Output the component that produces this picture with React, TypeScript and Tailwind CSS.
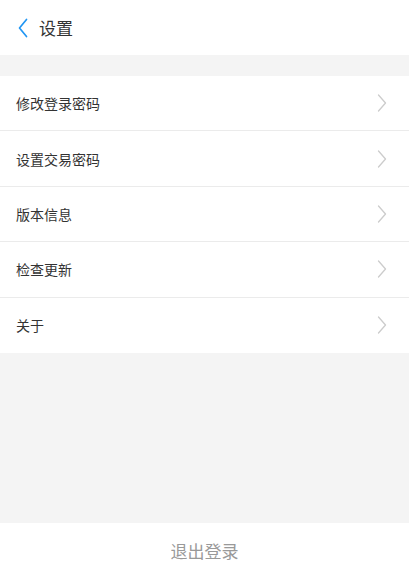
const items = ["修改登录密码", "设置交易密码", "版本信息", "检查更新", "关于"]

export default function App() {
  return (
    <div className="flex h-screen flex-col bg-[#f4f4f4] font-['Noto_Sans_CJK_SC',sans-serif] text-[#333]">
      {/* header */}
      <header className="flex h-[55px] shrink-0 items-center bg-white pl-[18px]">
        <svg width="10" height="20" viewBox="0 0 10 20" fill="none" className="mt-[1px]">
          <path d="M8.5 1.5L1.5 10l7 8.5" stroke="#2196f3" strokeWidth="1.7" strokeLinecap="round" strokeLinejoin="round" />
        </svg>
        <span className="ml-[11px] text-[17px] leading-none">设置</span>
      </header>

      <div className="mt-[21px] bg-white">
        {items.map((label, i) => (
          <div
            key={label}
            className={
              "flex h-[55.4px] items-center justify-between pl-4 pr-[22px] " +
              (i < items.length - 1 ? "border-b border-[#ebebeb]" : "")
            }
          >
            <span className="text-[14px] leading-none">{label}</span>
            <svg width="10" height="18" viewBox="0 0 10 18" fill="none">
              <path d="M1.5 1l7 8-7 8" stroke="#cccccc" strokeWidth="1.3" strokeLinecap="round" strokeLinejoin="round" />
            </svg>
          </div>
        ))}
      </div>

      <div className="flex-1" />

      <button className="flex h-[56px] shrink-0 items-center justify-center bg-white text-[17px] text-[#999]">
        退出登录
      </button>
    </div>
  )
}
